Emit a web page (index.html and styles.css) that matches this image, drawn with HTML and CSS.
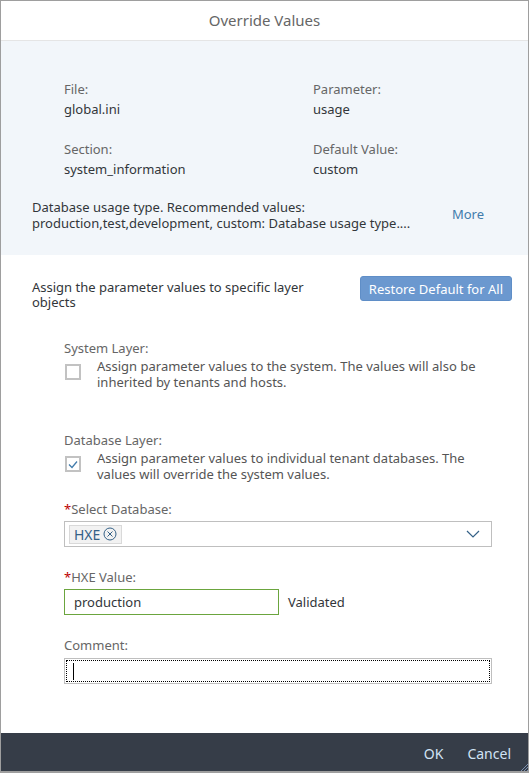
FILE: index.html
```html
<!DOCTYPE html>
<html>
<head>
<meta charset="utf-8">
<link rel="stylesheet" href="styles.css">
</head>
<body>
<div class="dialog">
  <header class="title-bar">Override Values</header>
  <section class="info">
    <div class="info-grid">
      <div class="field"><div class="lbl">File:</div><div class="val">global.ini</div></div>
      <div class="field"><div class="lbl">Parameter:</div><div class="val">usage</div></div>
      <div class="field"><div class="lbl">Section:</div><div class="val">system_information</div></div>
      <div class="field"><div class="lbl">Default Value:</div><div class="val">custom</div></div>
    </div>
    <div class="desc-row">
      <div class="desc"><div class="dline">Database usage type. Recommended values:</div><div class="dline">production,test,development, custom: Database usage type....</div></div>
      <a class="more">More</a>
    </div>
  </section>
  <section class="content">
    <div class="assign-row">
      <div class="assign-text">Assign the parameter values to specific layer objects</div>
      <button class="btn-restore">Restore Default for All</button>
    </div>
    <div class="form">
      <div class="layer">
        <div class="lbl">System Layer:</div>
        <div class="check-row">
          <span class="checkbox"></span>
          <span class="check-text">Assign parameter values to the system. The values will also be inherited by tenants and hosts.</span>
        </div>
      </div>
      <div class="layer layer-db">
        <div class="lbl">Database Layer:</div>
        <div class="check-row">
          <span class="checkbox checked"><svg width="10" height="9" viewBox="0 0 10 9"><path d="M1 4.5 L4 7.5 L9 1.5" fill="none" stroke="#427cac" stroke-width="1.3"/></svg></span>
          <span class="check-text">Assign parameter values to individual tenant databases. The values will override the system values.</span>
        </div>
      </div>
      <div class="lbl req lbl-select"><span class="star">*</span>Select Database:</div>
      <div class="combo">
        <span class="token">HXE <svg width="14" height="14" viewBox="0 0 14 14"><circle cx="7" cy="7" r="6" fill="none" stroke="#346187" stroke-width="1"/><path d="M4.5 4.5 L9.5 9.5 M9.5 4.5 L4.5 9.5" stroke="#346187" stroke-width="1"/></svg></span>
        <svg class="chev" width="14" height="8" viewBox="0 0 14 8"><path d="M1 1 L7 7 L13 1" fill="none" stroke="#346187" stroke-width="1.2"/></svg>
      </div>
      <div class="lbl req lbl-hxe"><span class="star">*</span>HXE Value:</div>
      <div class="value-row">
        <div class="input valid">production</div>
        <span class="validated">Validated</span>
      </div>
      <div class="lbl lbl-comment">Comment:</div>
      <div class="input comment"><span class="focus"><span class="caret"></span></span></div>
    </div>
  </section>
  <footer class="footer">
    <span class="fbtn">OK</span>
    <span class="fbtn">Cancel</span>
    <svg class="grip" width="8" height="8" viewBox="0 0 8 8"><path d="M8 1 L1 8 M8 4 L4 8 M8 7 L7 8" stroke="#7a8fb0" stroke-width="1"/></svg>
  </footer>
</div>
</body>
</html>
```
FILE: styles.css
```css
* { box-sizing: border-box; }
html, body { margin: 0; padding: 0; background: #fff; }
body {
  font-family: "Noto Sans", "Liberation Sans", sans-serif;
  font-size: 13px;
  color: #32363a;
}
.dialog {
  width: 529px;
  height: 773px;
  border: 1px solid #9e9e9e;
  border-bottom-width: 2px;
  display: flex;
  flex-direction: column;
  position: relative;
}
.title-bar {
  height: 40px;
  border-bottom: 1px solid #e5e5e5;
  display: flex;
  align-items: center;
  justify-content: center;
  font-size: 15px;
  color: #666;
  padding-bottom: 1px;
}
.info {
  background: #f2f6fa;
  padding: 38px 44px 23px 31px;
  height: 214px;
}
.info-grid {
  display: grid;
  grid-template-columns: 249px 1fr;
  row-gap: 20px;
  padding-left: 32px;
}
.lbl { color: #666; line-height: 20px; }
.val { color: #32363a; line-height: 20px; }
.desc-row {
  display: flex;
  align-items: center;
  justify-content: space-between;
  margin-top: 20px;
}
.desc { line-height: 16px; }
.dline { height: 16px; line-height: 16px; }
.more { color: #427cac; font-size: 13px; margin-top: -2px; }
.content {
  flex: 1;
  padding: 21px 16px 0 31px;
}
.assign-row {
  display: flex;
  justify-content: space-between;
  align-items: flex-start;
}
.assign-text {
  width: 290px;
  line-height: 15px;
  margin-top: 4px;
}
.btn-restore {
  height: 25px;
  padding: 0 8px;
  background: #6b98cf;
  border: 1px solid #5f8ec7;
  border-radius: 3px;
  color: #fff;
  font-family: inherit;
  font-size: 13px;
}
.form { padding-left: 32px; padding-top: 28px; }
.check-row {
  display: flex;
  align-items: flex-start;
}
.checkbox {
  width: 16px;
  height: 16px;
  border: 2px solid #c2c2c2;
  flex: none;
  margin: 6px 16px 0 1px;
  display: flex;
  align-items: center;
  justify-content: center;
  background: #fff;
}
.check-text { line-height: 16px; width: 400px; color: #555; }
.layer-db { margin-top: 40px; }
.lbl-select { margin-top: 17px; }
.star { color: #bb0000; }
.combo {
  width: 428px;
  height: 26px;
  border: 1px solid #bfbfbf;
  margin-top: 2px;
  display: flex;
  align-items: center;
  justify-content: space-between;
  padding: 0 11px 0 4px;
}
.token {
  height: 19px;
  background: #f2f2f2;
  border: 1px solid #d9d9d9;
  color: #346187;
  display: flex;
  align-items: center;
  gap: 3px;
  padding: 0 4px;
  font-size: 14px;
}
.lbl-hxe { margin-top: 20px; }
.value-row {
  display: flex;
  align-items: center;
  margin-top: 2px;
}
.input {
  height: 26px;
  border: 1px solid #bfbfbf;
  display: flex;
  align-items: center;
  padding-left: 9px;
  background: #fff;
}
.valid { width: 215px; border-color: #6ba53e; }
.validated { margin-left: 9px; color: #32363a; }
.lbl-comment { margin-top: 20px; }
.comment { width: 428px; padding: 1px; margin-top: 3px; }
.focus {
  display: flex;
  align-items: center;
  width: 100%;
  height: 100%;
  border: 1px dotted #000;
  padding-left: 6px;
}
.caret { width: 1px; height: 17px; background: #000; }
.footer {
  height: 38px;
  background: #363d48;
  display: flex;
  align-items: center;
  justify-content: flex-end;
  gap: 24px;
  padding-right: 17px;
  padding-top: 2px;
  position: relative;
}
.fbtn { color: #d1e3f5; font-size: 14px; }
.grip { position: absolute; right: 0; bottom: 0; }
```
